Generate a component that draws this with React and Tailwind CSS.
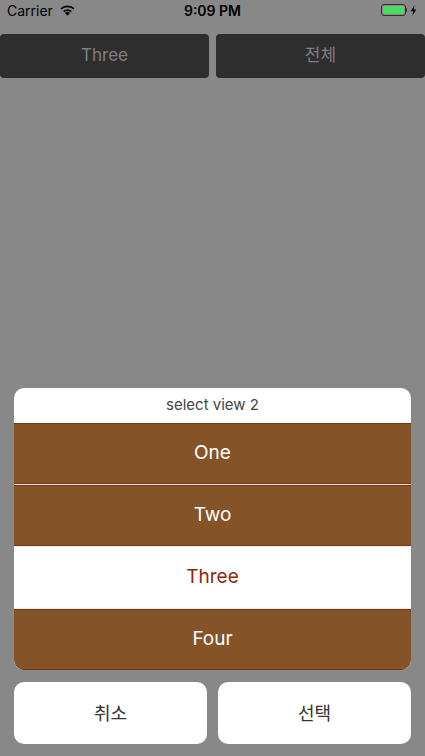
const OPTIONS = ['One', 'Two', 'Three', 'Four']
const SELECTED = 'Three'

function Wifi() {
  return (
    <svg width="17" height="12" viewBox="0 0 15 11" className="ml-[6px]">
      <path d="M7.5 10.8 L5.2 8.3 A3.3 3.3 0 0 1 9.8 8.3 Z" fill="#000" />
      <path d="M3.5 6.5 A5.7 5.7 0 0 1 11.5 6.5 L10.4 7.6 A4.2 4.2 0 0 0 4.6 7.6 Z" fill="#000" />
      <path d="M1 4 A9.2 9.2 0 0 1 14 4 L12.9 5.1 A7.7 7.7 0 0 0 2.1 5.1 Z" fill="#000" />
    </svg>
  )
}

function Battery() {
  return (
    <div className="flex items-center gap-[3px]">
      <div className="flex items-center">
        <div className="w-[25px] h-[12px] rounded-[3px] border border-[#333] p-[1px]">
          <div className="w-full h-full rounded-[1.5px] bg-[#4cd964]" />
        </div>
        <div className="w-[1.5px] h-[4px] bg-[#333] rounded-r-sm" />
      </div>
      <svg width="7" height="11" viewBox="0 0 7 11">
        <path d="M4.5 0 L0.8 6.2 H3.2 L2.4 11 L6.2 4.6 H3.8 Z" fill="#000" />
      </svg>
    </div>
  )
}

export default function App() {
  return (
    <div
      className="h-[756px] w-[425px] bg-[#888888] flex flex-col overflow-hidden"
      style={{ fontFamily: 'Inter, "Noto Sans CJK KR", sans-serif' }}
    >
      {/* Status bar */}
      <div className="h-5 px-[7px] flex items-center justify-between text-[14px] text-black">
        <div className="flex items-center w-[120px]">
          <span>Carrier</span>
          <Wifi />
        </div>
        <span className="font-semibold">9:09 PM</span>
        <div className="w-[120px] flex justify-end pr-[1px]">
          <Battery />
        </div>
      </div>

      {/* Top buttons */}
      <div className="mt-[14px] flex gap-[7px] h-[44px]">
        <div className="w-[209px] rounded-[4px] bg-[#2e2e2e] flex items-center justify-center text-[17px] text-[#7f7f7f]">
          Three
        </div>
        <div className="flex-1 rounded-[4px] bg-[#2e2e2e] flex items-center justify-center text-[17px] text-[#7f7f7f]">
          전체
        </div>
      </div>

      <div className="flex-1" />

      {/* Picker sheet */}
      <div className="px-[14px] pb-3 flex flex-col gap-3">
        <div className="rounded-[10px] overflow-hidden bg-white">
          <div className="h-[35px] flex items-center justify-center text-[15px] text-[#444]">
            select view 2
          </div>
          <div className="flex flex-col gap-px bg-[#f3ebe3]">
            {OPTIONS.map(opt => {
              const active = opt === SELECTED
              return (
                <div
                  key={opt}
                  className={`h-[61px] flex items-center justify-center text-[19px] ${
                    active ? 'bg-white text-[#8a2a0c]' : 'bg-[#845428] text-white border-y border-[#7f3413]'
                  }`}
                >
                  {opt}
                </div>
              )
            })}
          </div>
        </div>

        <div className="flex gap-[11px] h-[62px]">
          <div className="flex-1 rounded-[10px] bg-white flex items-center justify-center text-[18px] text-[#333]">
            취소
          </div>
          <div className="flex-1 rounded-[10px] bg-white flex items-center justify-center text-[18px] text-[#333]">
            선택
          </div>
        </div>
      </div>
    </div>
  )
}
